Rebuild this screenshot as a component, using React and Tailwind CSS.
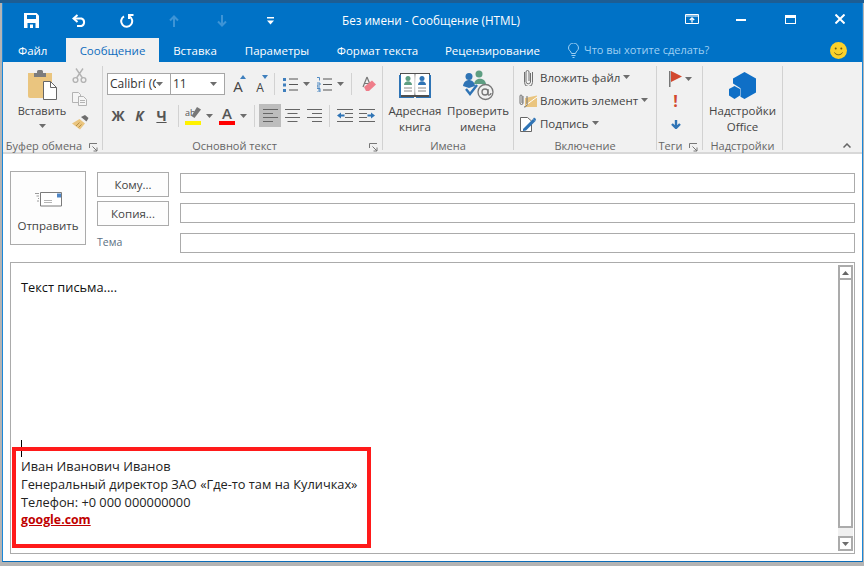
const ui = "font-['Open_Sans','Noto_Sans',sans-serif]";

const Caret = ({ className = "" }) => (
  <svg width="7" height="4" viewBox="0 0 7 4" className={className}>
    <path d="M0 0h7L3.500 4z" fill="#6d6d6d" />
  </svg>
);

const Launcher = () => (
  <svg width="9" height="9" viewBox="0 0 9 9" fill="none" stroke="#777">
    <path d="M.5 5V.5H8" />
    <path d="M3.500 3.500 8 8M8 4.500V8H4.500" />
  </svg>
);

const Sep = () => <div className="w-px h-[84px] bg-[#d2d2d2] shrink-0" />;
const SmallSep = () => <div className="w-px h-[22px] bg-[#d2d2d2] shrink-0" />;

const SaveIcon = () => (
  <svg width="15" height="15" viewBox="0 0 15 15" fill="none">
    <path d="M0 0h12.500L15 2.500V15H0z" fill="#fff" />
    <path d="M3 2h9v4H3z" fill="#0072c6" />
    <path d="M3.500 10h8v5h-8z" fill="#0072c6" />
    <path d="M6 11.500h3V15H6z" fill="#fff" />
  </svg>
);

const UndoIcon = () => (
  <svg width="15" height="13" viewBox="0 0 15 13" fill="none" stroke="#fff" strokeWidth="2">
    <path d="M5.500 1 1.500 4.500l4 3.500" />
    <path d="M2 4.500h7.500a4 4 0 0 1 0 7.500H5" />
  </svg>
);

const RedoIcon = () => (
  <svg width="14" height="14" viewBox="0 0 14 14" fill="none" stroke="#fff" strokeWidth="2">
    <path d="M9 2.200a5.500 5.500 0 1 1-5 .2" />
    <path d="M9 0v5" />
    <path d="M9 1h4.500" />
  </svg>
);

const ArrowUp = ({ color = "#3d94d6" }) => (
  <svg width="10" height="12" viewBox="0 0 10 12" fill="none" stroke={color} strokeWidth="2">
    <path d="M5 12V2M1 5.500 5 1.500l4 4" />
  </svg>
);

const ArrowDown = ({ color = "#3d94d6" }) => (
  <svg width="10" height="12" viewBox="0 0 10 12" fill="none" stroke={color} strokeWidth="2">
    <path d="M5 0v10M1 6.500l4 4 4-4" />
  </svg>
);

const QuickMenu = () => (
  <svg width="7" height="8" viewBox="0 0 7 8">
    <path d="M0 0h7v1.500H0z" fill="#fff" />
    <path d="M0 3.500h7L3.500 7.500z" fill="#fff" />
  </svg>
);

const RibbonDisplay = () => (
  <svg width="14" height="10" viewBox="0 0 14 10" fill="none" stroke="#fff">
    <path d="M.5.500h13v9H.5z" />
    <path d="M.5 2h13" />
    <path d="M7 8.500V4M4.800 6 7 3.800 9.200 6" strokeWidth="1.300" />
  </svg>
);

const PasteIcon = () => (
  <svg width="29" height="30" viewBox="0 0 29 30">
    <path d="M0 3h24v25H2a2 2 0 0 1-2-2z" fill="#eac57f" />
    <path d="M6 3h3V1.500A1.500 1.500 0 0 1 10.500 0h3A1.500 1.500 0 0 1 15 1.500V3h3v4H6z" fill="#7c7c7c" />
    <path d="M15.500 11.500h7l6 6v12h-13z" fill="#fff" stroke="#666" />
    <path d="M22.500 11.500v6h6" fill="none" stroke="#666" />
  </svg>
);

const CutIcon = () => (
  <svg width="15" height="15" viewBox="0 0 15 15" fill="none" stroke="#b3b3b3" strokeWidth="1.400">
    <circle cx="3.500" cy="12" r="2.400" />
    <circle cx="11.500" cy="12" r="2.400" />
    <path d="M4.500 10 11 .5M10.500 10 4 .5" />
  </svg>
);

const CopyIcon = () => (
  <svg width="15" height="14" viewBox="0 0 15 14" fill="#f5f5f5" stroke="#b3b3b3">
    <path d="M.5.500h6l2 2v8h-8z" />
    <path d="M6.500 4.500h5l3 3v6h-8z" />
    <path d="M8 8.500h5M8 10.500h5" />
  </svg>
);

const PainterIcon = () => (
  <svg width="17" height="15" viewBox="0 0 17 15">
    <path d="M9 2.500 13 .5l3.500 3-2 3.500z" fill="#6d6d6d" transform="translate(0 -.5)" />
    <path d="M7.500 4 13 8.500 8 14.500 0 8.500z" fill="#eac57f" />
    <path d="M4 11 7.500 7.500M6.500 12.500 9.500 9.500" stroke="#b88f45" />
  </svg>
);

const FontBox = ({ value, width }) => (
  <div className={`${width} h-[22px] border border-[#a6a6a6] bg-white flex items-center pl-[2px] pr-[7px] -ml-px first:ml-0`}>
    <span className="flex-1 text-[12px] text-[#333] overflow-hidden whitespace-nowrap">{value}</span>
    <Caret />
  </div>
);

const GrowA = ({ size, up }) => (
  <span className="relative flex w-[16px] h-[20px] items-end justify-center">
    <span className={`${size} leading-none text-[#444]`}>A</span>
    <svg width="6" height="4" viewBox="0 0 6 4" className="absolute right-0 top-[1px]">
      <path d={up ? "M0 4h6L3 0z" : "M0 0h6L3 4z"} fill="#3f7fbd" />
    </svg>
  </span>
);

const Bullets = () => (
  <svg width="15" height="15" viewBox="0 0 15 15">
    <path d="M0 1h3v3H0zM0 6.500h3v3H0zM0 12h3v3H0z" fill="#3f7fbd" />
    <path d="M6 2h9M6 7.500h9M6 13h9" stroke="#555" />
  </svg>
);

const Numbers = () => (
  <svg width="15" height="15" viewBox="0 0 15 15">
    <path d="M0 .500h2.500v3M0 6h3v2H0v2h3M0 11.500h3v3.500H0M1 13h2" fill="none" stroke="#3f7fbd" strokeWidth=".9" />
    <path d="M6 2h9M6 7.500h9M6 13h9" stroke="#555" />
  </svg>
);

const EraserIcon = () => (
  <svg width="16" height="16" viewBox="0 0 16 16">
    <path d="M7 1 3 11M7 1l4 10M4.500 7.500h5" stroke="#777" fill="none" strokeWidth="1.200" />
    <path d="M4 11 12 4.500l4 4L9 15H6z" fill="#ef7d8a" />
  </svg>
);

const AlignIcon = ({ kind }) => {
  const d = {
    left: "M0 .5h15M0 4.500h10M0 8.500h15M0 12.500h10",
    center: "M0 .5h15M2.500 4.500h10M0 8.500h15M2.500 12.500h10",
    right: "M0 .5h15M5 4.500h10M0 8.500h15M5 12.500h10",
  }[kind];
  return (
    <svg width="15" height="13" viewBox="0 0 15 13">
      <path d={d} stroke="#666" fill="none" />
    </svg>
  );
};

const IndentIcon = ({ flip }) => (
  <svg width="16" height="13" viewBox="0 0 16 13" className={flip ? "-scale-x-100" : ""}>
    <path d="M0 .5h16M8 4.500h8M8 8.500h8M0 12.500h16" stroke="#666" fill="none" />
    <path d="M0 6.500 4 3.500v2h3.500v2H4v2z" fill="#2f74b5" />
  </svg>
);

const Highlighter = () => (
  <span className="relative flex flex-col w-[16px] h-[19px]">
    <svg width="16" height="15" viewBox="0 0 16 15">
      <text x="0" y="10" fontSize="9" fill="#555" fontFamily="Open Sans">ab</text>
      <path d="M12 1 16 3.500 9.500 12 6.500 10z" fill="#777" />
    </svg>
    <span className="absolute bottom-0 left-0 h-[4px] w-[16px] bg-[#fff200]" />
  </span>
);

const FontColor = () => (
  <span className="relative flex flex-col items-center w-[16px] h-[19px]">
    <span className="text-[15px] leading-[15px] text-[#555] font-semibold">A</span>
    <span className="absolute bottom-0 left-0 h-[4px] w-[16px] bg-[#ff0000]" />
  </span>
);

const BookIcon = () => (
  <svg width="32" height="26" viewBox="0 0 32 26">
    <path d="M1 1h30v24H1z" fill="#4f4f4f" />
    <path d="M2 2h13.500c.5 0 .5 21 0 21H2zM16.500 2H30v21H16.500c-.5 0-.5-21 0-21z" fill="#fff" />
    <path d="M0 3h2v22h13v1H0zM32 3h-2v22H17v1h15z" fill="#2f74b5" />
    <circle cx="9" cy="6.500" r="2.500" fill="#5e9e82" />
    <path d="M5 13c0-5 8-5 8 0z" fill="#5e9e82" />
    <circle cx="23" cy="6.500" r="2.500" fill="#2f74b5" />
    <path d="M19 13c0-5 8-5 8 0z" fill="#2f74b5" />
    <path d="M5 16h8M5 19h8M19 16h8M19 19h8" stroke="#888" />
  </svg>
);

const CheckNamesIcon = () => (
  <svg width="31" height="31" viewBox="0 0 31 31" fill="none">
    <circle cx="16" cy="4" r="3.500" fill="#5e9e82" />
    <path d="M11 14c1-7 11-7 12 0z" fill="#5e9e82" />
    <circle cx="6" cy="6.500" r="3.500" fill="#2f74b5" />
    <path d="M0 16c1-8 11-8 12 0l-6 2z" fill="#2f74b5" />
    <path d="M3 19l4 5 7-9" stroke="#2f74b5" strokeWidth="2.400" />
    <circle cx="22.500" cy="22" r="7.500" stroke="#777" strokeWidth="1.300" />
    <circle cx="22" cy="22" r="3" stroke="#777" strokeWidth="1.300" />
    <path d="M25 19v5c0 2 3 1 3-1" stroke="#777" strokeWidth="1.300" />
  </svg>
);

const ClipIcon = () => (
  <svg width="9" height="17" viewBox="0 0 9 17" fill="none" stroke="#707070">
    <path d="M6.500 4v9a2.300 2.300 0 0 1-4.500 0V3a1.500 1.500 0 0 1 3 0v9" />
    <path d="M8.500 3v10.500a4 4 0 0 1-8 0V3" />
  </svg>
);

const AttachItemIcon = () => (
  <svg width="18" height="14" viewBox="0 0 18 14" fill="none">
    <path d="M6 4 18 1.500V13H6z" fill="#eac57f" />
    <path d="M7 11 18 3" stroke="#fff" />
    <path d="M4 2v7a1.500 1.500 0 0 1-3 0V2a1 1 0 0 1 2 0v7M8 2v7a3 3 0 0 1-3 4" stroke="#707070" />
  </svg>
);

const SignatureIcon = () => (
  <svg width="16" height="16" viewBox="0 0 16 16" fill="none">
    <path d="M.5 1.500h7l4 3.500v10.500H.5z" fill="#fff" stroke="#666" />
    <path d="M3 13 13 3l2.500 2L6 14.500 3 15z" fill="#2f74b5" />
    <path d="M13 3l1-1.500L16 3l-.5 2" fill="#2f74b5" />
  </svg>
);

const Attach = ({ icon, label }) => (
  <div className="flex items-center h-[23px]">
    <span className="w-[20px] flex justify-center mr-[2px]">{icon}</span>
    <span className="text-[11.5px] text-[#444] whitespace-nowrap">{label}</span>
    <Caret className="ml-[3px] mb-[2px]" />
  </div>
);

const CubesIcon = () => (
  <svg width="27" height="27" viewBox="0 0 27 27">
    <path d="M15.500 0 27 6.500v14L15.500 27l-4-2.300v-8.500L4 11.500V6.500z" fill="#0f6fc6" />
    <path d="M5.500 14l5.500 3v6.500L5.500 27 0 23.500V17z" fill="#0f6fc6" />
  </svg>
);

const Smiley = () => (
  <svg width="17" height="17" viewBox="0 0 17 17">
    <circle cx="8.500" cy="8.500" r="8.500" fill="#fcd12a" />
    <circle cx="5.700" cy="6.500" r="1" fill="#6b5a10" />
    <circle cx="11.300" cy="6.500" r="1" fill="#6b5a10" />
    <path d="M4.500 10.500c1.500 3 6.500 3 8 0" fill="none" stroke="#6b5a10" />
  </svg>
);

const Bulb = () => (
  <svg width="11" height="15" viewBox="0 0 11 15" fill="none" stroke="#9fd0f3">
    <path d="M3.500 10.500C3 8 .5 7.500.5 5a5 5 0 0 1 10 0c0 2.500-2.500 3-3 5.500z" />
    <path d="M3.500 12.500h4M4.500 14.500h2" />
  </svg>
);

const EnvelopeIcon = () => (
  <svg width="27" height="15" viewBox="0 0 27 15" fill="none">
    <path d="M0 1.500h4M1.500 4h2.500M3 6.500h1M2 9h2" stroke="#9a9a9a" />
    <path d="M5.500.5h21v13.500h-21z" fill="#fff" stroke="#7b7b7b" />
    <path d="M22 1.500h4v4h-4z" fill="#4f86c6" />
    <path d="M9 8.500h8M9 10.500h8" stroke="#b5b5b5" />
  </svg>
);

const Group = ({ label, width, launcher, labelPad = "", children }) => (
  <div className={`${width} shrink-0 flex flex-col h-[88px]`}>
    <div className="h-[73px]">{children}</div>
    <div className={`relative flex justify-center items-center h-[15px] text-[11px] text-[#666] whitespace-nowrap ${labelPad}`}>
      {label}
      {launcher && (
        <span className="absolute right-[4px] top-[4px] flex">
          <Launcher />
        </span>
      )}
    </div>
  </div>
);

const Field = () => <div className="h-[20px] border border-[#ababab] bg-white" />;

const AddressButton = ({ label }) => (
  <button className="w-[72px] h-[25px] border border-[#ababab] bg-[#fdfdfd] text-[11.5px] text-[#444] text-center">
    {label}
  </button>
);

const tabs = [
  { label: "Вставка", width: "w-[72px]" },
  { label: "Параметры", width: "w-[92px]" },
  { label: "Формат текста", width: "w-[109px]" },
  { label: "Рецензирование", width: "w-[121px]" },
];

export default function App() {
  return (
    <div className={`w-[864px] h-[566px] overflow-hidden bg-[#b4b4b4] relative ${ui}`}>
      <div className="h-[3px] bg-[#1d5d93]" />
      <div className="ml-[2px] w-[861px] h-[559px] border-x border-b border-x-[#1a87d9] border-b-[#0a6cb8] bg-white flex flex-col">
        {/* title bar */}
        <div className="h-[35px] bg-[#0072c6] flex items-center text-white shrink-0">
          <div className="flex items-center h-full">
            <span className="w-[15px] ml-[21px] flex"><SaveIcon /></span>
            <span className="w-[15px] ml-[33px] flex"><UndoIcon /></span>
            <span className="w-[14px] ml-[33px] flex"><RedoIcon /></span>
            <span className="ml-[35px] flex"><ArrowUp /></span>
            <span className="ml-[38px] flex"><ArrowDown /></span>
            <span className="ml-[40px] flex"><QuickMenu /></span>
          </div>
          <span className="ml-[68px] text-[11.7px] whitespace-nowrap">Без имени - Сообщение (HTML)</span>
          <div className="ml-auto flex items-center h-full pb-[3px]">
            <RibbonDisplay />
            <span className="block w-[10px] h-[2px] bg-white ml-[37px] mt-[2px]" />
            <span className="block w-[11px] h-[9px] border border-white border-t-[3px] ml-[39px]" />
            <svg width="10" height="10" viewBox="0 0 10 10" className="ml-[39px] mr-[17px]">
              <path d="M.5.5l9 9M9.500.5l-9 9" stroke="#fff" strokeWidth="2" />
            </svg>
          </div>
        </div>

        {/* tabs */}
        <div className="h-[24px] bg-[#0072c6] flex items-stretch text-[11.5px] text-white shrink-0">
          <div className="w-[63px] pl-[15px] pt-[4px]">Файл</div>
          <div className="w-[93px] bg-[#f1f1f1] text-[#0f6cbd] text-center pt-[4px]">Сообщение</div>
          {tabs.map((tab) => (
            <div key={tab.label} className={`${tab.width} text-center pt-[4px] whitespace-nowrap`}>{tab.label}</div>
          ))}
          <div className="flex items-center ml-[15px] text-[11px] text-[#9fd0f3]">
            <Bulb />
            <span className="ml-[5px]">Что вы хотите сделать?</span>
          </div>
          <div className="ml-auto mr-[15px] flex items-center"><Smiley /></div>
        </div>

        {/* ribbon */}
        <div className="h-[92px] bg-[#f1f1f1] border-b-2 border-[#d8d8d8] flex items-start pt-[4px] shrink-0 relative">
          <Group label="Буфер обмена" width="w-[99px]" labelPad="pr-[17px]" launcher>
            <div className="flex h-full">
              <div className="w-[60px] ml-[9px] flex flex-col items-center pt-[4px]">
                <PasteIcon />
                <span className="text-[11px] text-[#444] leading-[22px]">Вставить</span>
                <Caret className="mt-[2px]" />
              </div>
              <div className="flex flex-col gap-[9px] pt-[2px]">
                <CutIcon />
                <CopyIcon />
                <PainterIcon />
              </div>
            </div>
          </Group>
          <Sep />
          <Group label="Основной текст" width="w-[279px]" labelPad="pr-[16px]" launcher>
            <div className="pl-[4px] pt-[7px]">
              <div className="flex items-center h-[22px]">
                <FontBox value="Calibri (С" width="w-[64px]" />
                <FontBox value="11" width="w-[55px]" />
                <span className="ml-[5px]"><GrowA size="text-[15px]" up /></span>
                <span className="ml-[6px]"><GrowA size="text-[12px]" /></span>
                <span className="ml-[6px] mr-[8px]"><SmallSep /></span>
                <Bullets />
                <Caret className="ml-[5px]" />
                <span className="ml-[7px] flex"><Numbers /></span>
                <Caret className="ml-[5px]" />
                <span className="ml-[7px] mr-[8px]"><SmallSep /></span>
                <EraserIcon />
              </div>
              <div className="flex items-center h-[23px] mt-[9px]">
                <span className="w-[22px] text-center text-[14px] font-bold text-[#555]">Ж</span>
                <span className="w-[21px] text-center text-[14px] font-bold italic text-[#555]">К</span>
                <span className="w-[23px] text-center text-[14px] font-bold underline text-[#555]">Ч</span>
                <span className="ml-[5px] mr-[6px]"><SmallSep /></span>
                <Highlighter />
                <Caret className="ml-[5px]" />
                <span className="ml-[6px] flex"><FontColor /></span>
                <Caret className="ml-[5px]" />
                <span className="ml-[7px] mr-[4px]"><SmallSep /></span>
                <span className="w-[22px] h-[23px] bg-[#bdbdbd] flex items-center justify-center"><AlignIcon kind="left" /></span>
                <span className="w-[22px] h-[23px] flex items-center justify-center"><AlignIcon kind="center" /></span>
                <span className="w-[22px] h-[23px] flex items-center justify-center"><AlignIcon kind="right" /></span>
                <span className="ml-[4px] mr-[7px]"><SmallSep /></span>
                <IndentIcon />
                <span className="ml-[6px] flex"><IndentIcon flip /></span>
              </div>
            </div>
          </Group>
          <Sep />
          <Group label="Имена" width="w-[130px]">
            <div className="flex text-[11.5px] text-[#444] leading-[16px] text-center">
              <div className="w-[64px] flex flex-col items-center pt-[6px]">
                <BookIcon />
                <span className="mt-[5px]">Адресная<br />книга</span>
              </div>
              <div className="w-[62px] flex flex-col items-center pt-[4px]">
                <CheckNamesIcon />
                <span className="mt-[2px]">Проверить<br />имена</span>
              </div>
            </div>
          </Group>
          <Sep />
          <Group label="Включение" width="w-[142px]">
            <div className="pl-[4px]">
              <Attach icon={<ClipIcon />} label="Вложить файл" />
              <Attach icon={<AttachItemIcon />} label="Вложить элемент" />
              <Attach icon={<SignatureIcon />} label="Подпись" />
            </div>
          </Group>
          <Sep />
          <Group label="Теги" width="w-[45px]" labelPad="pr-[18px]" launcher>
            <div className="flex flex-col items-start pl-[12px] pt-[2px]">
              <div className="flex items-center h-[22px]">
                <svg width="13" height="16" viewBox="0 0 13 16">
                  <path d="M0 0h1.500v16H0z" fill="#777" />
                  <path d="M2 0 13 5.500 2 11z" fill="#d2492f" />
                </svg>
                <Caret className="ml-[3px]" />
              </div>
              <div className="h-[21px] w-[13px] flex justify-center items-center text-[16px] font-bold text-[#d2492f]">!</div>
              <div className="h-[26px] w-[13px] flex justify-center items-center">
                <svg width="10" height="9" viewBox="0 0 10 9" fill="none" stroke="#2f74b5" strokeWidth="2.400">
                  <path d="M5 0v7M1 4l4 4 4-4" />
                </svg>
              </div>
            </div>
          </Group>
          <Sep />
          <Group label="Надстройки" width="w-[79px]">
            <div className="flex flex-col items-center pt-[6px] text-[11.5px] text-[#444] leading-[16px] text-center">
              <CubesIcon />
              <span className="mt-[4px]">Надстройки<br />Office</span>
            </div>
          </Group>
          <Sep />
          <svg width="8" height="5" viewBox="0 0 8 5" fill="none" stroke="#666" strokeWidth="1.500" className="absolute right-[11px] top-[81px]">
            <path d="M.5 4.500 4 1l3.500 3.500" />
          </svg>
        </div>

        {/* address block */}
        <div className="flex px-[7px] pt-[17px] shrink-0">
          <button className="w-[76px] h-[74px] border border-[#ababab] bg-[#fdfdfd] flex flex-col items-center pt-[20px] text-[11.5px] text-[#444]">
            <EnvelopeIcon />
            <span className="mt-[10px]">Отправить</span>
          </button>
          <div className="w-[72px] ml-[11px] flex flex-col gap-[4px] pt-px">
            <AddressButton label="Кому..." />
            <AddressButton label="Копия..." />
            <span className="text-[10.5px] text-[#5b7083] leading-[16px] mt-[4px]">Тема</span>
          </div>
          <div className="flex-1 ml-[11px] flex flex-col gap-[10px] pt-[2px]">
            <Field />
            <Field />
            <Field />
          </div>
        </div>

        {/* message body */}
        <div className="mx-[7px] mt-[9px] h-[292px] border border-[#ababab] flex shrink-0">
          <div className="flex-1 flex flex-col justify-between pl-[10px] pb-[24px] pt-[15px] text-[12.8px] text-[#222]">
            <div className="leading-[18px] text-[#111]">Текст письма....</div>
            <div className="leading-[17.7px]">
              <div>Иван Иванович Иванов</div>
              <div>Генеральный директор ЗАО «Где-то там на Куличках»</div>
              <div>Телефон: +0 000 000000000</div>
              <a className="text-[12.3px] font-bold underline text-[#c00000]">google.com</a>
            </div>
          </div>
          <div className="w-[15px] mr-px my-[2px] bg-[#f0f0f0] flex flex-col">
            <div className="h-[15px] border-2 border-[#ababab] bg-white flex items-center justify-center">
              <svg width="7" height="4" viewBox="0 0 7 4"><path d="M0 4h7L3.500 0z" fill="#666" /></svg>
            </div>
            <div className="h-[248px] border-2 border-t-0 border-[#ababab] bg-white" />
            <div className="flex-1" />
            <div className="h-[15px] border-2 border-[#ababab] bg-white flex items-center justify-center">
              <Caret />
            </div>
          </div>
        </div>
      </div>

      {/* text cursor + red annotation frame over the body */}
      <div className="absolute left-[21px] top-[440px] w-px h-[17px] bg-black" />
      <div className="absolute left-[12px] top-[447px] w-[359px] h-[101px] border-4 border-[#ff1a1a]" />
    </div>
  );
}
